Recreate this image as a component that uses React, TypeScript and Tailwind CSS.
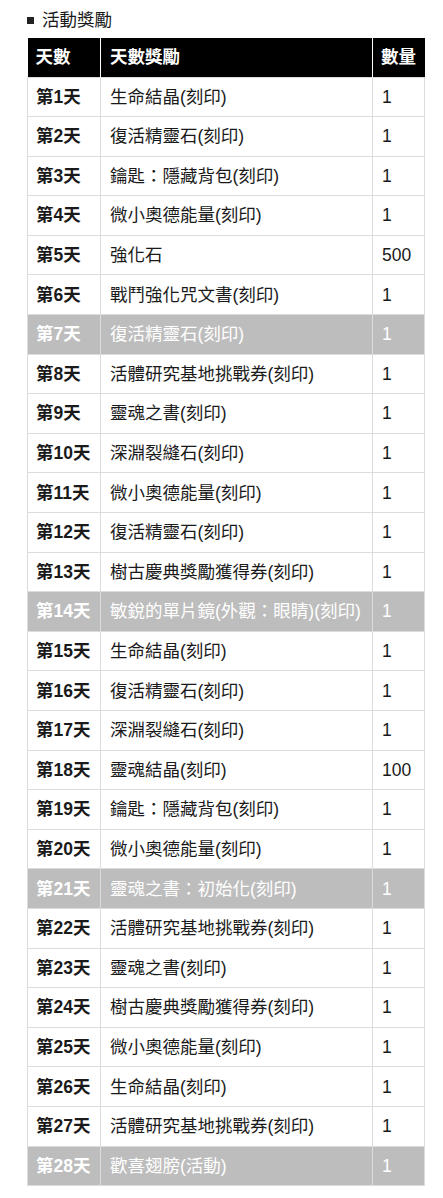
const rows: [string, string, string, boolean?][] = [
  ['第1天', '生命結晶(刻印)', '1'],
  ['第2天', '復活精靈石(刻印)', '1'],
  ['第3天', '鑰匙：隱藏背包(刻印)', '1'],
  ['第4天', '微小奧德能量(刻印)', '1'],
  ['第5天', '強化石', '500'],
  ['第6天', '戰鬥強化咒文書(刻印)', '1'],
  ['第7天', '復活精靈石(刻印)', '1', true],
  ['第8天', '活體研究基地挑戰券(刻印)', '1'],
  ['第9天', '靈魂之書(刻印)', '1'],
  ['第10天', '深淵裂縫石(刻印)', '1'],
  ['第11天', '微小奧德能量(刻印)', '1'],
  ['第12天', '復活精靈石(刻印)', '1'],
  ['第13天', '樹古慶典獎勵獲得券(刻印)', '1'],
  ['第14天', '敏銳的單片鏡(外觀：眼睛)(刻印)', '1', true],
  ['第15天', '生命結晶(刻印)', '1'],
  ['第16天', '復活精靈石(刻印)', '1'],
  ['第17天', '深淵裂縫石(刻印)', '1'],
  ['第18天', '靈魂結晶(刻印)', '100'],
  ['第19天', '鑰匙：隱藏背包(刻印)', '1'],
  ['第20天', '微小奧德能量(刻印)', '1'],
  ['第21天', '靈魂之書：初始化(刻印)', '1', true],
  ['第22天', '活體研究基地挑戰券(刻印)', '1'],
  ['第23天', '靈魂之書(刻印)', '1'],
  ['第24天', '樹古慶典獎勵獲得券(刻印)', '1'],
  ['第25天', '微小奧德能量(刻印)', '1'],
  ['第26天', '生命結晶(刻印)', '1'],
  ['第27天', '活體研究基地挑戰券(刻印)', '1'],
  ['第28天', '歡喜翅膀(活動)', '1', true],
];

export default function App() {
  return (
    <div className="min-h-screen bg-white px-[27px] pt-[8px] pb-4 font-['Liberation_Sans','Noto_Sans_CJK_TC',sans-serif] text-[17.5px] text-[#1a1a1a]">
      {/* 標題 */}
      <div className="flex items-center h-[24px] mb-[6px]">
        <span className="w-[7px] h-[7px] bg-[#222] mr-[8px]" />
        <span>活動獎勵</span>
      </div>

      <table className="w-[398px] border-collapse table-fixed">
        <thead>
          <tr className="bg-black text-white h-[39px]">
            <th className="w-[73px] text-left font-bold pl-[8px] border-r border-white">天數</th>
            <th className="w-[272px] text-left font-bold pl-[9px] border-r border-white">天數獎勵</th>
            <th className="text-left font-bold pl-[8px]">數量</th>
          </tr>
        </thead>
        <tbody>
          {rows.map(([day, item, qty, gray]) => (
            <tr
              key={day}
              className={gray ? 'h-[39.6px] bg-[#bdbdbd] text-white' : 'h-[39.6px] bg-white'}
            >
              <td className="border border-[#dcdcdc] pl-[8px] font-bold whitespace-nowrap">{day}</td>
              <td className="border border-[#dcdcdc] pl-[9px] whitespace-nowrap">{item}</td>
              <td className="border border-[#dcdcdc] pl-[9px]">{qty}</td>
            </tr>
          ))}
        </tbody>
      </table>
    </div>
  );
}
